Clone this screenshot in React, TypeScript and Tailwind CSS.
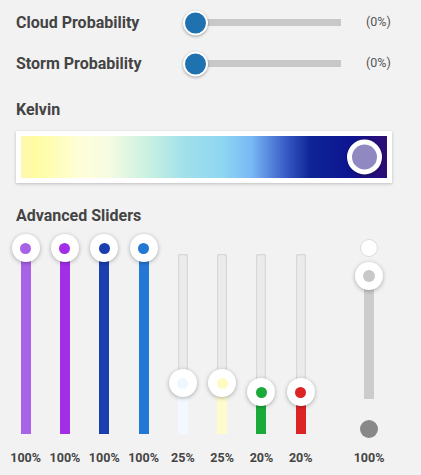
import React from "react";

const font = { fontFamily: "Roboto, 'Liberation Sans', sans-serif" };

function HSlider({ label }: { label: string }) {
  return (
    <div className="flex flex-row items-center h-[41px]">
      <div className="w-[167px] text-[16px] font-bold text-[#444]">{label}</div>
      <div className="relative w-[158px] h-[7px] flex items-center">
        <div className="ml-[10px] w-[148px] h-[7px] bg-[#c8c8c8]" />
        <div className="absolute left-0 top-1/2 -translate-y-1/2 w-[25px] h-[25px] rounded-full bg-[#2071b0] border-2 border-white shadow-[0_1px_3px_rgba(0,0,0,0.35)]" />
      </div>
      <div className="ml-[25px] text-[12.5px] text-[#555]">(0%)</div>
    </div>
  );
}

type Col = { value: number; color: string; dot: string };

const cols: Col[] = [
  { value: 100, color: "#a862e6", dot: "#a862e6" },
  { value: 100, color: "#a22ee8", dot: "#a22ee8" },
  { value: 100, color: "#1a3db0", dot: "#1a3db0" },
  { value: 100, color: "#2378d4", dot: "#2378d4" },
  { value: 25, color: "#f2f8fe", dot: "#eef6fe" },
  { value: 25, color: "#fefccc", dot: "#fdfbc2" },
  { value: 20, color: "#1aaa3a", dot: "#1aaa3a" },
  { value: 20, color: "#dd2424", dot: "#dd2424" },
];

function VSlider({ value, color, dot }: Col) {
  // thumb centre: 194px (0%) down to 14px (100%) inside a 200px box
  const thumbY = 194 - (value / 100) * 180;
  const fill = 200 - thumbY;
  return (
    <div className="w-[39.3px] flex flex-col items-center">
      <div className="relative w-full h-[200px] flex flex-col items-center">
        <div className="mt-[20px] w-[10px] flex-1 flex flex-col rounded-t-[3px] bg-[#ebebeb] shadow-[inset_0_0_2px_rgba(0,0,0,0.3)] overflow-hidden">
          <div className="flex-1" />
          <div style={{ height: fill, backgroundColor: color }} />
        </div>
        <div
          className="absolute left-1/2 -translate-x-1/2 -translate-y-1/2 w-[28px] h-[28px] rounded-full bg-white shadow-[0_1px_4px_rgba(0,0,0,0.3)] flex items-center justify-center"
          style={{ top: thumbY }}
        >
          <div className="w-[11px] h-[11px] rounded-full" style={{ backgroundColor: dot }} />
        </div>
      </div>
      <div className="mt-[16px] text-[12.5px] leading-[16px] font-bold text-[#444]">{value}%</div>
    </div>
  );
}

function RangeSlider() {
  return (
    <div className="ml-[29px] w-[39.3px] flex flex-col items-center">
      <div className="relative w-full h-[200px] flex flex-col items-center">
        <div className="shrink-0 mt-[5px] w-[18px] h-[18px] rounded-full bg-white border border-[#ddd]" />
        <div className="shrink-0 mt-[19px] w-[10px] h-[123px] bg-[#cccccc]" />
        <div className="absolute left-1/2 -translate-x-1/2 -translate-y-1/2 top-[42px] w-[28px] h-[28px] rounded-full bg-white shadow-[0_1px_4px_rgba(0,0,0,0.3)] flex items-center justify-center">
          <div className="w-[12px] h-[12px] rounded-full bg-[#c8c8c8]" />
        </div>
        <div className="shrink-0 mt-[21px] w-[18px] h-[18px] rounded-full bg-[#888]" />
      </div>
      <div className="mt-[16px] text-[12.5px] leading-[16px] font-bold text-[#444]">100%</div>
    </div>
  );
}

export default function App() {
  return (
    <div className="w-[421px] h-[475px] bg-[#f2f2f2] overflow-hidden" style={font}>
      <div className="pl-[16px] pt-[2px]">
        <HSlider label="Cloud Probability" />
        <HSlider label="Storm Probability" />
        <div className="mt-[16px] text-[16px] leading-[20px] font-bold text-[#444]">Kelvin</div>
        <div className="mt-[11px] w-[376px] h-[52px] bg-white p-[5px] shadow-[0_1px_3px_rgba(0,0,0,0.22)]">
          <div className="relative w-full h-full bg-[linear-gradient(to_right,#fff8b0_0%,#fffca0_4%,#fefed8_16%,#f6fce2_24%,#c8f0e2_35%,#a0e0ea_45%,#8ed6f2_55%,#78b8f4_63%,#3a5fc8_72%,#0f2496_79%,#0c1590_90%,#2e0c74_100%)]">
            <div className="absolute right-[5px] top-1/2 -translate-y-1/2 w-[35px] h-[35px] rounded-full border-[5px] border-white bg-[#9088c0] shadow-[0_1px_3px_rgba(0,0,0,0.3)]" />
          </div>
        </div>
        <div className="mt-[23px] text-[16px] leading-[20px] font-bold text-[#444]">Advanced Sliders</div>
      </div>
      <div className="mt-[8px] pl-[6px] flex flex-row">
        {cols.map((c, i) => (
          <VSlider key={i} {...c} />
        ))}
        <RangeSlider />
      </div>
    </div>
  );
}
